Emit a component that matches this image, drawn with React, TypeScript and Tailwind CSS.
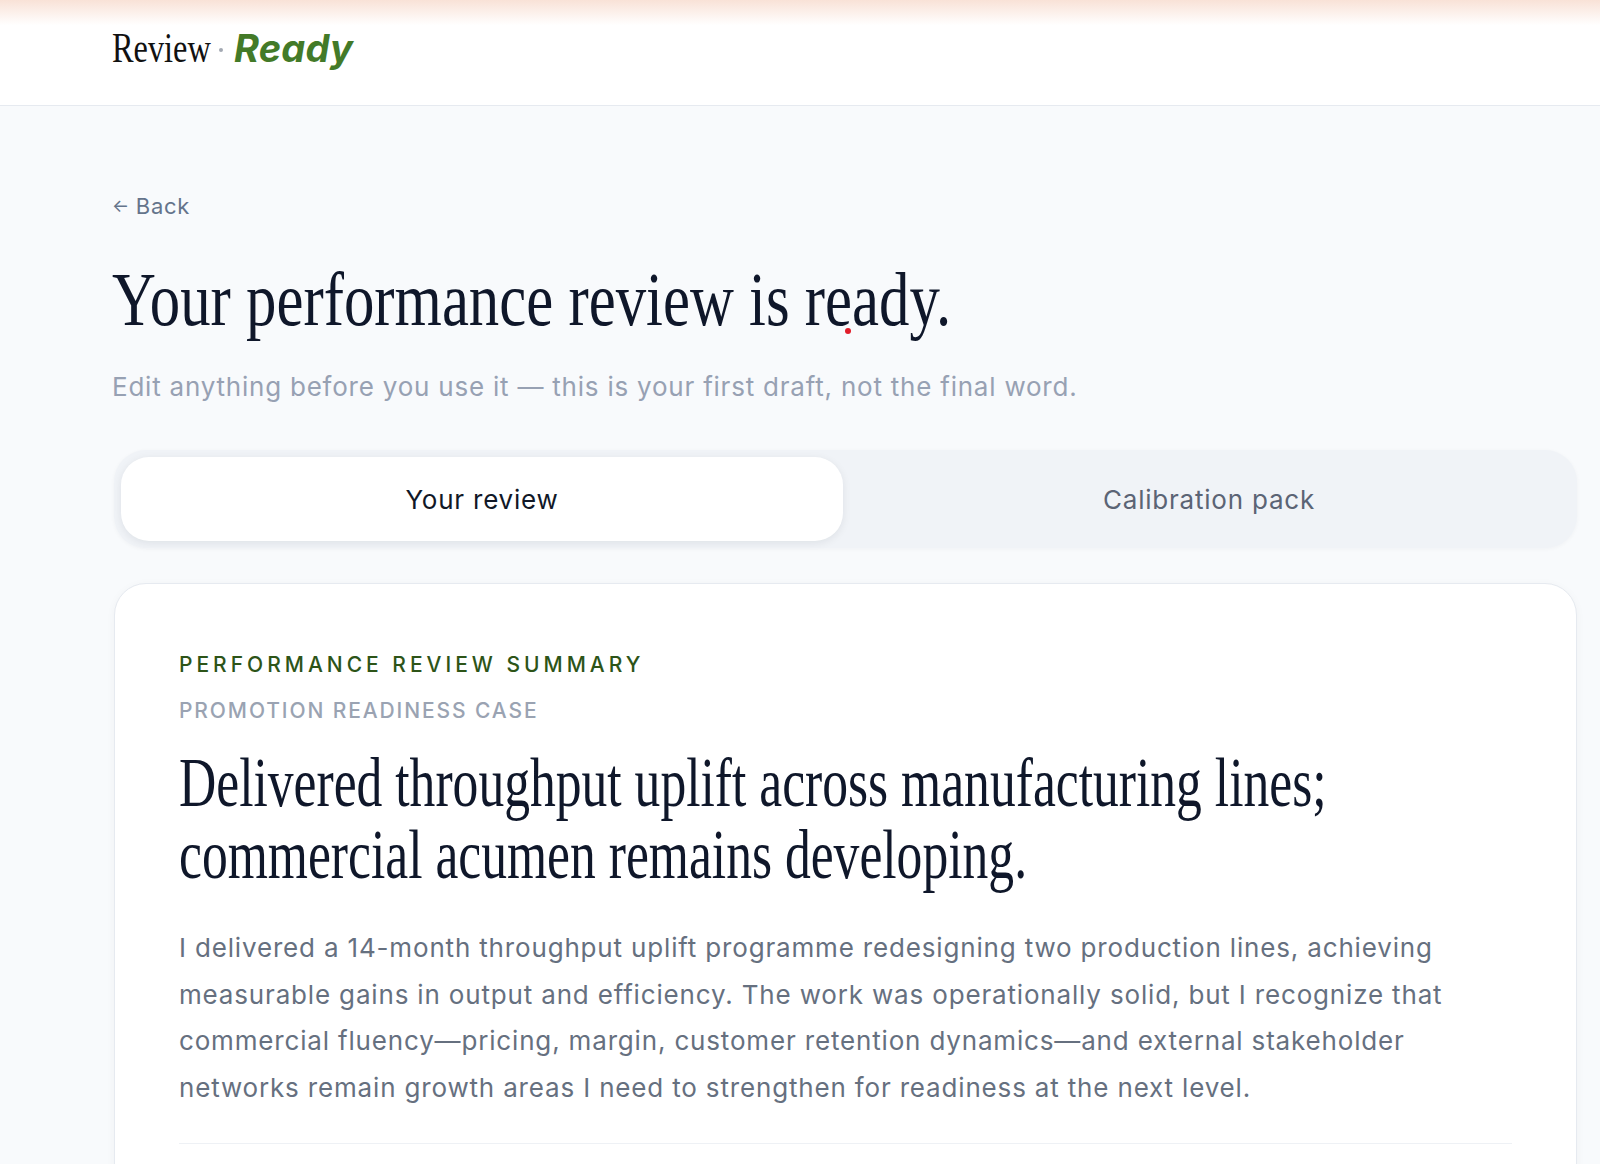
import React from "react";

/**
 * Review ready — header with wordmark, page intro, segmented tabs and the
 * first summary card (cut off by the viewport, as in the source).
 */
const serif = "font-['Liberation_Serif',serif]";
const sans = "font-['Inter',sans-serif]";

const bodyLines = [
  "I delivered a 14-month throughput uplift programme redesigning two production lines, achieving",
  "measurable gains in output and efficiency. The work was operationally solid, but I recognize that",
  "commercial fluency—pricing, margin, customer retention dynamics—and external stakeholder",
  "networks remain growth areas I need to strengthen for readiness at the next level.",
];

export default function App() {
  return (
    <div className={`h-screen overflow-hidden bg-[#f8fafc] ${sans}`}>
      {/* Header */}
      <header className="h-[106px] border-b border-[#e6eaf0] bg-linear-to-b from-[#f9e2d7] via-white via-[24%] to-white pl-[112px] pt-[26px]">
        <div className="flex items-baseline">
          <span className="inline-block w-[98px] whitespace-nowrap">
            <span
              className={`inline-block origin-left scale-x-[0.77] text-[42px] leading-[44px] text-[#111111] ${serif}`}
            >
              Review
            </span>
          </span>
          <span
            aria-hidden
            className="ml-[9px] mr-[11px] inline-block size-[4px] self-center translate-y-[2px] rounded-full bg-[#a3a9b3]"
          />
          <span className="text-[38px] font-bold italic leading-[44px] tracking-[0.005em] text-[#437a28]">
            Ready
          </span>
        </div>
      </header>

      <main className="pl-[112px] pr-[23px] pt-[86px]">
        <button className="flex items-center gap-1.5 text-[22px] leading-[28px] tracking-[0.03em] text-[#64748b]">
          <span className="text-[18px]">←</span>
          <span>Back</span>
        </button>

        <h1
          className={`relative mt-[41px] whitespace-nowrap text-[76px] leading-[76px] text-[#0f172a] ${serif}`}
        >
          <span className="inline-block origin-left scale-x-[0.8]">
            Your performance review is ready.
          </span>
          <span className="absolute left-[733px] top-[67px] size-[6px] rounded-full bg-[#e11d2a]" />
        </h1>

        <p className="mt-[34px] text-[26px] leading-[32px] tracking-[0.03em] text-[#97a1b3]">
          Edit anything before you use it — this is your first draft, not the
          final word.
        </p>

        {/* Tabs */}
        <div className="ml-[2px] mt-[47px] grid grid-cols-2 gap-[5px] rounded-[32px] bg-[#f0f3f7] p-[7px] shadow-[0_1px_4px_rgba(15,23,42,0.04)]">
          <button className="flex h-[84px] items-center justify-center rounded-[28px] bg-white text-[26px] tracking-[0.03em] text-[#111827] shadow-[0_2px_8px_rgba(15,23,42,0.08)]">
            Your review
          </button>
          <button className="flex h-[84px] items-center justify-center rounded-[28px] text-[26px] tracking-[0.03em] text-[#5b6475]">
            Calibration pack
          </button>
        </div>

        {/* Summary card */}
        <section className="ml-[2px] mt-[35px] rounded-[32px] border border-[#e6eaf0] bg-white px-[64px] pb-[120px] pt-[67px] shadow-[0_2px_10px_rgba(15,23,42,0.04)]">
          <p className="text-[21px] font-medium uppercase leading-[28px] tracking-[0.19em] text-[#2d5418]">
            Performance review summary
          </p>
          <p className="mt-[18px] text-[21px] font-medium uppercase leading-[28px] tracking-[0.09em] text-[#9aa3b2]">
            Promotion readiness case
          </p>

          <h2
            className={`mt-[22px] whitespace-nowrap text-[70px] leading-[72px] text-[#0f172a] ${serif}`}
          >
            <span className="inline-block origin-left scale-x-[0.737]">
              Delivered throughput uplift across manufacturing lines;
              <br />
              commercial acumen remains developing.
            </span>
          </h2>

          <p className="mt-[34px] whitespace-nowrap text-[26px] leading-[46.5px] tracking-[0.032em] text-[#66707f]">
            {bodyLines.map((line, i) => (
              <React.Fragment key={i}>
                {line}
                {i < bodyLines.length - 1 && <br />}
              </React.Fragment>
            ))}
          </p>

          <div className="mt-[32px] h-px bg-[#eef1f5]" />
        </section>
      </main>
    </div>
  );
}
